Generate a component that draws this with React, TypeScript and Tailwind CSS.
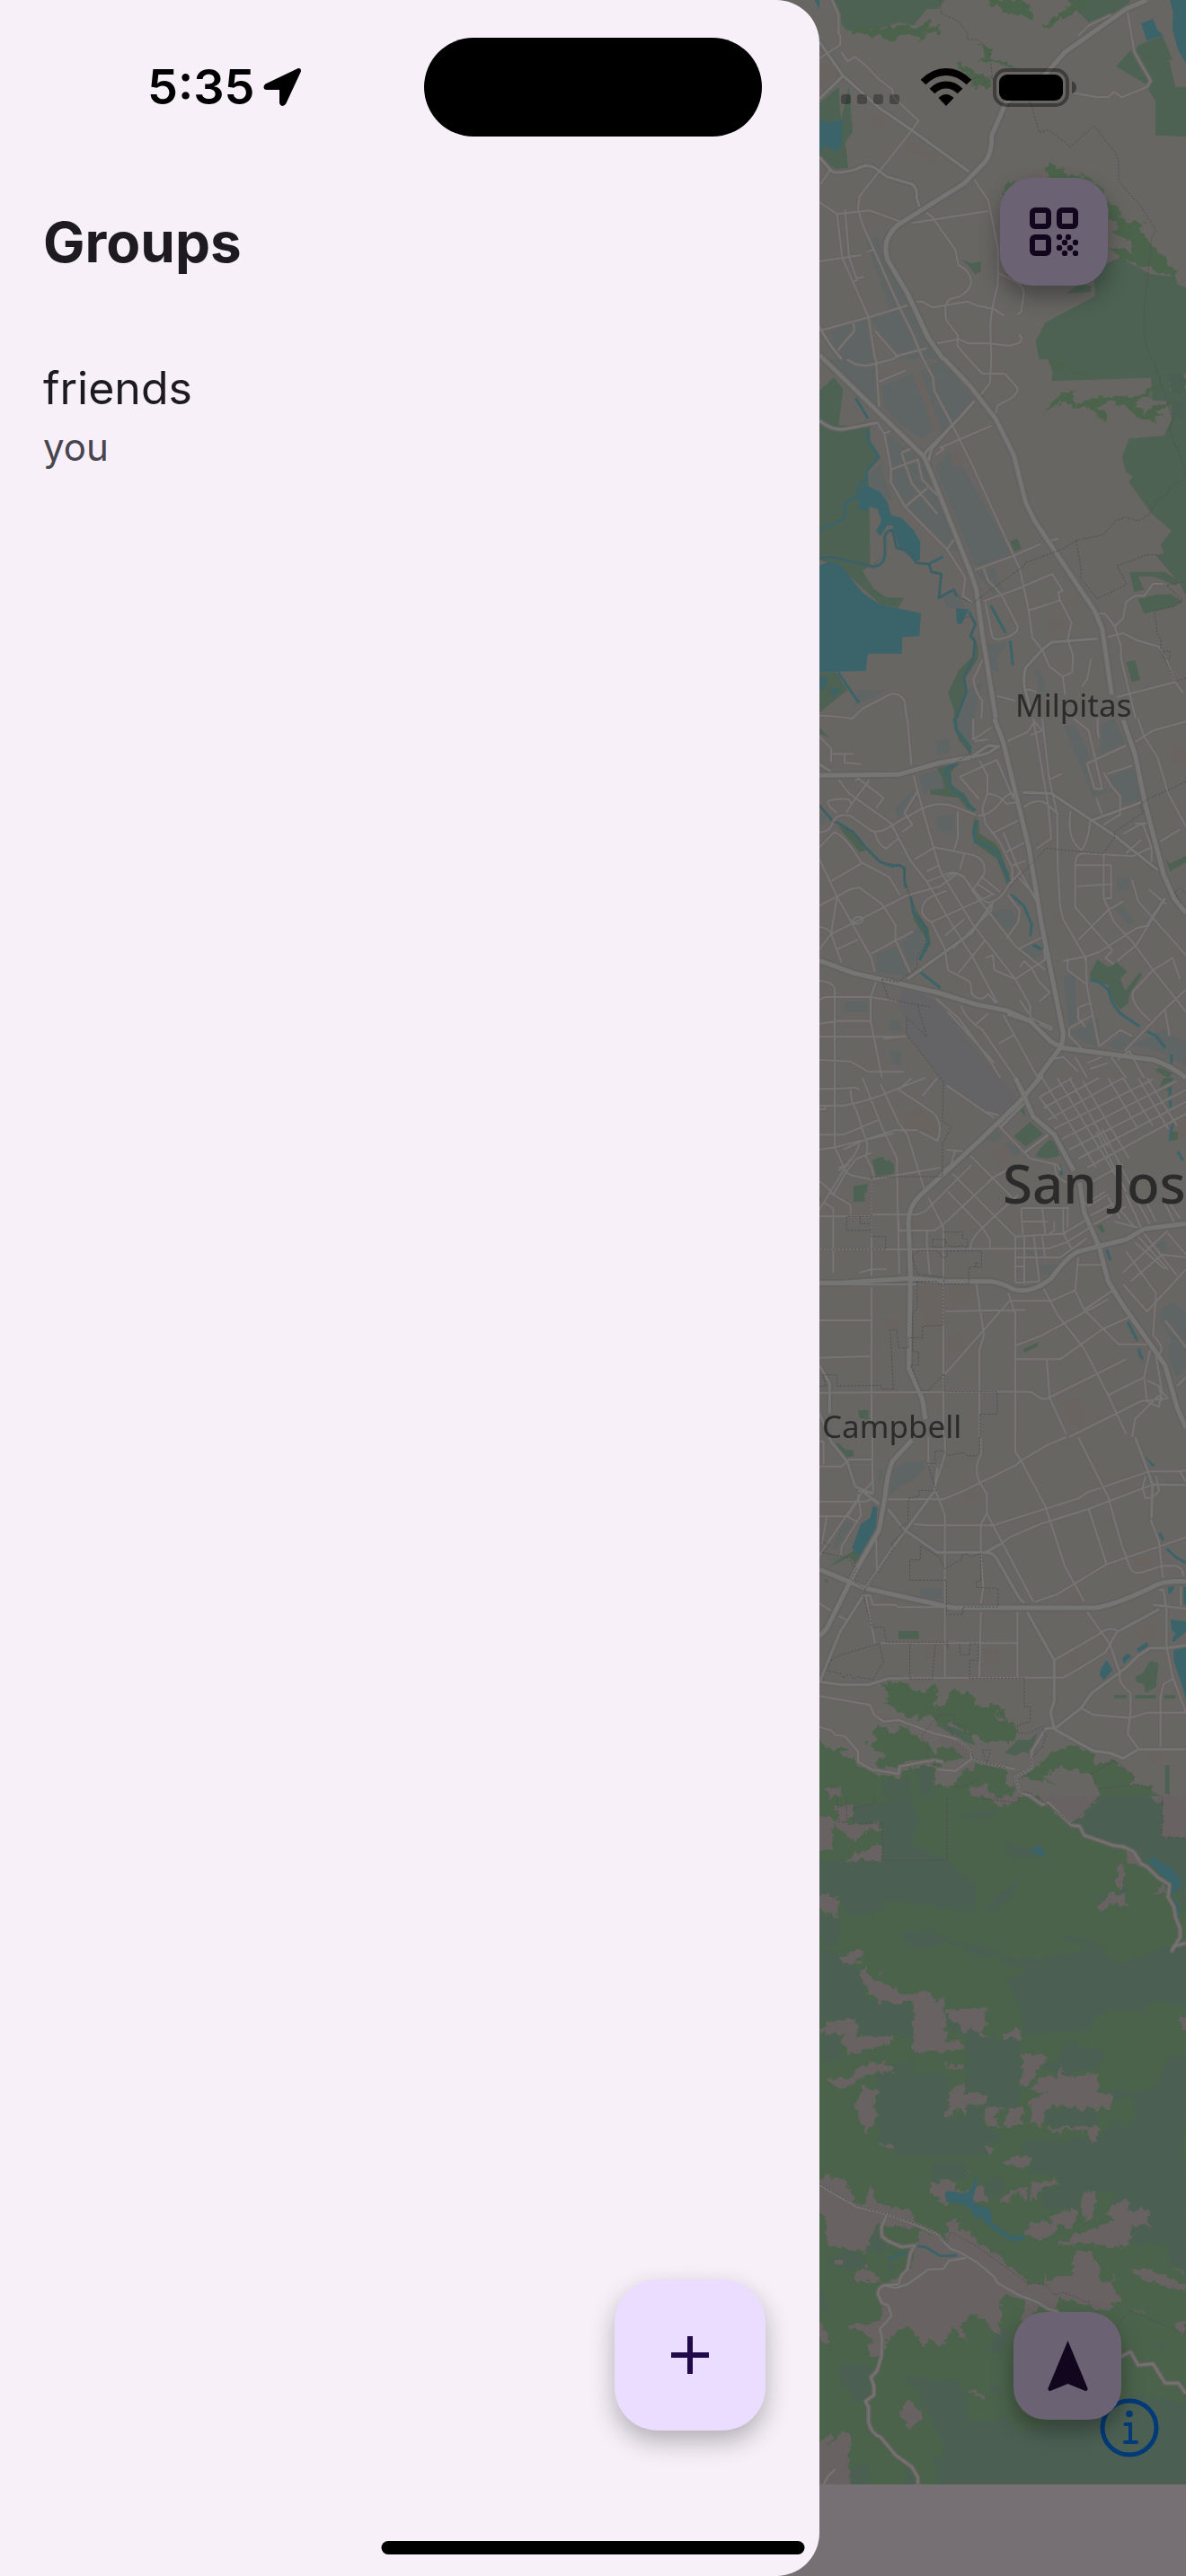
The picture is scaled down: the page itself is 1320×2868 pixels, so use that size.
import type { ReactNode } from 'react'

type Kind =
  | 'industry'
  | 'built'
  | 'airport'
  | 'park'
  | 'wood'
  | 'meadow'
  | 'clearing'
  | 'water'
  | 'river'
  | 'lane'
  | 'street'
  | 'highway'
  | 'border'

type Tile = { y: number } & Partial<Record<Kind, string>>

// each tile is 400px tall, its paths use 3 units per pixel
const tiles: Tile[] = [
  {
    y: 0,
    industry:
      'M190 800L230 790 250 860 330 1000 370 1080 440 1200H300L240 1110 205 1060 270 1030Z M70 1110L190 1065 215 1200H110Z M225 1060L320 1035 375 1200H290Z',
    built: 'M36 230L70 200 110 245 36 300Z M195 385L250 380 255 420 225 440Z M320 495L350 475 440 530 420 552Z M690 600L790 560 830 590 740 650Z',
    park: 'M85 0H455L430 30 395 30 350 85 300 75 240 95 130 103 112 85Z M865 0H1075L1060 25 935 75 890 30Z M1100 152L1182 120 1215 200 1203 200 1225 290 1260 290V457L1158 452V335L1137 302 1125 280 1026 222 1076 168 1090 185 1135 270 1142 262 1085 175Z M36 345L100 290 108 400 135 290 147 440 123 475 132 560 90 565 36 530Z M510 867L545 880 575 872 575 908 555 915 540 895Z M862 980L900 950 945 955 940 975Z M758 1140L790 1078 955 990 957 965 950 900 1040 860 1140 915 1225 925 1232 950 1260 960V1200H770Z',
    wood: 'M145 95L200 90 250 97 300 85 350 92 400 65 410 75 385 95 435 85 437 110 395 115 360 140 370 120 330 110 290 125 295 137 220 120 150 107Z M600 0H700L745 25 752 60 720 62 670 40 610 15Z M770 75L790 85 850 35 900 5 925 0H965L900 35 880 50 840 60 800 93 780 90Z M570 145L605 160 600 200 660 205 690 230 640 215 565 203 590 190Z M485 208L520 220 550 240 600 255 620 300 590 295 545 285 550 260 500 225Z M792 555L805 548 870 582 930 590 990 635 980 660 800 600Z M645 650L660 615 695 600 660 660Z M1000 670L1030 690 1060 725 1020 710 1050 740 1125 742 1110 770 1140 810 1190 865 1230 910 1225 930 1170 905 1130 890 1060 870 1000 830 1040 830 1090 850 1070 800 1010 780 1040 760 1000 720Z',
    water: 'M1110 77L1150 63 1163 97 1183 118 1130 137Z M36 410L53 400 70 412 90 402 112 402 110 485 90 508 68 490 50 488 36 515Z M1205 0H1260V210L1235 170 1215 100 1217 40Z M20 0H36V30Z',
    lane: 'M110 175L130 205 155 190 190 218 235 265 280 300 283 325 367 403 345 435 170 655 165 700 180 750 305 1030 345 1110 382 1200 M36 195L105 150 106 120 100 112 100 50 78 0 M40 615L70 570 M36 675L95 715 205 703 305 740 M95 715L112 860 200 1060 222 1200 M122 700L135 860 160 930 185 925M145 943L165 935 M36 873L175 852 M195 842L217 833 M345 745L600 705 M393 710L413 725 490 835 500 885Q540 905 543 940 540 970 505 990L470 1000Q450 1015 460 1070L498 1120 497 1155 535 1200 M360 1007L380 1008 415 1027 530 1007 560 1020 620 1033 652 1054 M553 600L600 670 632 830V950Q605 1050 607 1100L610 1200 M635 913L690 940Q725 960 717 990 L710 1040 697 1051 M430 1147L500 1133 535 1147 605 1147 670 1155 705 1145 712 1130 703 1117 M36 1105L200 1060 330 1020 M280 1200L300 1187 395 1163 M150 1080L153 1105 97 1170 M222 1105L300 1195 M1065 40L1088 175 1142 270 1130 290 1045 325 1020 306 1003 323 965 325 880 310 M900 120L935 85 1010 50',
    street: 'M36 140L115 253 235 360 345 435 535 573 M36 330L115 253 M36 525L75 570Q90 585 160 565 190 545 220 560L260 590 345 615Q365 630 360 660L370 690 M36 1090Q60 1140 110 1200',
    highway: 'M1130 0L1060 30 855 175 780 260 660 340 612 450 Q612 510 590 540L520 612 300 750Q240 800 265 870L330 980 400 1130 450 1200',
    border: 'M438 0L443 45 500 70 530 110V132H565L602 165 615 270 M740 340L770 443 800 433 875 490 953 420 1020 505 1035 535V607L1110 690 1160 770 1145 795 1120 1050V1130L1145 1200 M556 258H615L556 300Z',
  },
  {
    y: 400,
    industry:
      'M60 0H225L232 150 190 130Z M245 90L345 50 425 235 375 265 310 220 250 160Z M375 40L440 0 550 130 440 250 415 200Z M255 245L385 340 420 430 500 640 470 640 330 500 275 420Z M425 360L470 305 520 370 680 650 590 695 555 690Z M190 400L240 350 280 480 230 440Z M560 710L620 695 650 780 620 790Z M590 955L665 945 630 1000 635 1045 600 1030Z M520 1110L580 1080 550 1200H490Z M165 1105L260 1105 150 1160Z M755 1035L770 1035 795 1110H770Z M455 790L500 780 520 830H455Z',
    built: 'M355 55L380 60 430 200 445 245 420 240 390 160Z M470 320L500 305 520 355 490 365Z M803 870L850 860 855 895 810 920Z M865 800L900 790 900 830 870 830Z',
    park: 'M36 105L85 60 115 100 100 220 205 225 205 270 240 325 195 370 200 410 203 500 205 690 180 705 215 765 260 795 318 797 300 830 240 820 100 690 36 670Z M672 608L697 598 711 632 687 643Z M800 0H1260V48H1205V105H1260V790L1235 740 1160 655 1187 648 1175 620 1212 573 1145 515 1070 410 1083 390 1058 375 1048 325 1070 265 1187 255 1212 200 1210 140 1147 137 1143 62 812 72 815 45Z M1072 710L1190 710 1240 745 1225 755 1150 725 1100 725 1120 770 1087 777Z M1100 800L1165 785 1210 785 1250 810 1220 825 1120 850Z M36 1050L90 1045 130 1105 36 1180Z M550 920L567 960 565 1000 520 1070 530 1115 495 1200H485L485 1170 465 1115 500 1040 550 990Z M1060 1012L1090 1005 1107 1070 1080 1078Z',
    wood: 'M785 165L850 118 885 105 875 125 895 148 940 145 965 118 1000 128 1040 120 1080 130 1120 110 1150 85 1180 95 1120 130 1090 150 1120 178 1190 145 1215 150 1160 175 1190 190 1150 190 1165 220 1110 200 1060 155 1000 145 960 155 990 180 985 215 945 160 895 158 850 140 790 172Z M805 0L850 20 930 42 955 75 935 60 880 38 815 18Z',
    meadow: 'M1205 48H1260V108H1205Z M1208 138H1248V198H1208Z',
    water: 'M185 415L240 445 265 480 275 520 310 530 350 570 373 610 372 670 355 675 300 625 280 555 262 555 240 590 225 575 243 540 230 500 205 492 195 505 168 505 165 460Z M36 690L70 675 110 690 180 780 240 820 290 830 375 848 370 925 313 928 312 983 197 983 192 1040 105 1043 80 1045 36 1047Z M492 832L535 835 510 885 495 883Z M36 1065L68 1060 50 1105 36 1100Z M70 1105L110 1095 85 1128Z',
    river: 'M157 130L198 197M198 235V275L235 327 195 372 192 408 168 415 160 462 125 475 118 530 100 542 36 570 M36 667L70 660 215 693Q250 690 255 655V590Q260 570 280 570L293 630 332 640 360 680 403 685 410 710 443 717 435 797 485 770 495 793M535 843L557 885 540 925 555 940 550 1000 518 1060 527 1110 493 1200M403 683L448 660 M608 823L658 915M673 940L682 1022M98 1045L168 1148',
    lane: 'M225 0L235 160M235 75L323 37M128 0Q160 25 200 20L280 0M535 0L580 48H655L697 95Q700 110 680 128L630 155 625 180M383 0L415 60 420 105 480 220 540 340 705 700 735 840 747 930 780 970 803 1025 848 1060 857 1120M575 118L605 80 610 0M425 320L450 300 440 295 610 222M228 210L253 250 275 365V412L322 493 462 635 523 730 515 790 550 815M253 247L273 240M278 367L365 335 378 400 430 455M310 312L340 300M310 312L345 415 430 517M322 493L397 430M462 635L485 603M555 703L675 660 775 617M810 605L835 599M583 697L600 740 643 785 697 890Q705 910 670 925 620 945 613 925L590 812M583 808L690 770 813 717 848 772 833 780 840 805 878 880 865 935 883 990 880 1045 848 1060M733 840L840 805M970 850H990L1022 892 1043 960V1000L1092 1200M1022 892L1050 865 1060 810 1090 790 1120 790 1150 750 1185 750M998 928L1050 915 1100 940 1170 960 1195 1005 1225 1078 1250 1115M1225 1078L1030 1128 M580 1005L550 1070Q555 1110 580 1140L577 1200M630 1125L690 1140M36 1190Q80 1190 145 1200L180 1167 270 1120Q300 1110 320 1140L328 1200M943 1000L930 1070 912 1093M718 1105L740 1103 760 1112',
    street: 'M36 205Q80 240 120 233L228 212M553 140L500 200 400 300 385 320M810 945L965 933M810 945L780 970 725 1030Q715 1060 722 1100L740 1170 M480 220L410 300 400 340',
    highway: 'M36 -15L385 325 400 360 540 710 560 770 580 920 625 1200M450 -5L540 90 625 200 685 320 725 480 755 540 955 840 980 900 1012 1120',
    border: 'M36 665L75 660 215 690 255 650 250 590 280 570 293 628 332 638 358 678 403 685 410 710 443 717 435 795 485 768 500 795 545 815 720 690 722 680 850 633 893 605 983 587 1023 540 1060 528 1100 540 1135 520 1165 465 1190 460 1210 425 1255 395 1258 370 1205 235 1215 200 1150 0 M893 605L910 700 908 730 963 800 1062 752 1030 690 1130 653H1162L1235 745 1195 755 1250 805 1220 825 1155 840 1163 915 1177 935 1175 975 1225 1075 1260 1065M1183 975H1207V1000H1188ZM497 833L515 865 540 860 557 885 540 925 555 940 550 1000 518 1060 527 1110 493 1200',
  },
  {
    y: 800,
    industry:
      'M498 0H550L550 90 500 60Z M420 75L470 68 475 110 430 120Z M370 190L450 165 460 230 400 240 385 260Z M852 25L890 20 940 130 925 160 960 240 1030 235 950 262Z M975 20L1020 0 1060 90 975 120Z M1000 190L1085 165 1110 270 1050 285Z M290 300L350 240 360 260 300 340Z M425 330L485 320 485 370 460 382 430 365Z M610 650L650 635 675 635 700 670 690 700 660 715Z M310 750L370 690 390 760 340 830Z M225 790L300 760 340 860 230 850Z M850 860L890 850 890 1010 870 1030Z M715 770L760 750 790 780 740 810Z M1000 1090L1060 1045 1090 1070 1040 1110Z M1085 1090L1180 1040 1260 1080V1160L1160 1110Z M120 945H197V980H120Z M268 1005L308 1010V1045L270 1040Z M272 1110H308V1160L280 1150Z M1030 530H1070V570L1032 580Z M36 320H60L50 350 36 360Z M870 1050L970 1000 970 1095 940 1090Z M1010 620L1035 610 1090 680 1070 690Z',
    built: 'M1210 95H1260V155L1215 150Z M820 655L845 650 845 685 825 690Z',
    airport: 'M315 905L370 915 430 950 520 1060 635 1200H440L325 1050V1000L300 960Z',
    park: 'M480 0H495L500 40 545 95 540 120 500 70Z M430 165L500 150 475 180 478 220 520 255 555 305 545 320 500 265 407 253 405 240 455 232 445 195Z M552 340H567L570 385 620 415 640 440 675 545 665 560 630 470 555 415 545 380Z M100 360L150 375 190 440 170 447 130 400Z M940 850L965 805 1000 830 1030 815 1063 845 1040 870 1057 910 1105 848 1113 855 1070 925 1068 950 1040 972 1015 940 1000 890 940 868Z M1190 465L1205 485 1260 458V480L1207 510Z M345 600L355 640 400 700 407 750 395 775 375 800 395 740 350 670Z M1157 1175L1170 1165 1215 1185 1200 1200Z M36 30L70 65 36 50Z',
    river: 'M487 0L493 40 535 90 540 112 M500 152L460 165 455 185 470 187 470 220 495 252 515 253 535 290 557 307 M563 340L553 375 555 412 585 420 630 448 640 480 665 520V555 M36 290L75 335 110 355 150 380 190 430 240 480 280 493 303 490 320 500V540L327 567 M340 592L350 650 390 700 400 750 370 807 M370 845L440 900 M675 587L720 627 745 690 740 727M748 755L782 773M940 873L970 880 1000 905 1015 950 1040 985 1105 1028M1130 1045L1160 1060 1190 1100M1211 1122V1155',
    lane: 'M36 60L75 100V145M75 118H150M120 120V148L175 152M330 0L343 155M100 205L135 250 275 350 340 475 395 545 480 690 550 800 630 950M203 205L155 270 125 315M155 210L165 200 250 265 225 300M65 275Q100 265 135 270L145 290M65 275Q60 290 95 315M36 380Q70 380 80 350 90 315 140 325L210 375Q240 385 280 355L380 300Q440 275 490 295L560 323Q600 330 640 280T690 265M350 190L385 320 440 510 550 690 690 870 740 960M320 315L347 355 313 378M320 315L365 240M220 378Q230 420 258 435L300 400M570 140L597 190V250L580 300 590 350 640 415 680 500V550M505 195L628 138 685 270M505 195L570 270M597 250Q640 255 660 285L690 280M498 310V400L485 440M355 470L420 430 520 450 505 505M395 510L435 490M520 450Q600 460 585 520L550 570Q580 610 600 615 640 610 665 560L710 510M460 530Q490 505 520 530L570 610M378 640Q380 610 410 595L460 575M378 640Q380 665 410 680L455 770 465 840 540 880 545 920Q575 950 600 920L625 950M410 680L610 590M395 545L470 515Q520 510 550 580L690 760 790 840M665 590L705 640 700 680 660 735M455 725L520 670M480 770L545 705 610 640 615 610M700 770L780 730M760 595L700 530M500 850L590 740M590 800L615 790 620 840 690 870M705 830L720 810 745 835 770 880 805 915 770 945M690 870L790 805 785 770M720 295Q770 260 800 290L810 400 760 435M610 385L700 340M660 445L720 415M680 490L725 475 M36 430L85 380Q110 385 150 440L175 480 270 530 305 590M75 543L175 485M36 470L95 595 210 800 220 845M36 625L140 570 170 565 245 620 290 690V740L340 850M95 595L75 720 36 770M75 720L145 685Q150 655 180 665 185 690 145 685M145 685L330 590 440 560 500 515M75 720L110 815M97 770L165 738M210 785L350 710M36 695Q70 700 75 720M650 380L700 500 760 610M580 530L640 580 M780 0L803 200 830 320 832 500 840 630 850 670 925 800 930 900 970 1095M750 0L800 290 835 320M885 0L935 40 980 235 955 235 930 150 1060 90M965 0V40L970 65M997 185L1080 157M985 180L1010 225 1040 260V320L985 355M1100 0L1120 60 1165 130 1200 250 1260 360M1090 78L1150 40 1260 10M960 265L980 320M875 310Q860 400 910 440 935 410 940 340M890 490H1010V600H990M890 490V630L950 700 1015 775M897 560L1015 553M985 455V600L1020 680 1085 750 1150 840M890 490Q890 450 920 450L1080 460 1145 430M1080 540L1100 610 1220 745 1260 790M1135 570L1195 620M1050 385L1115 350 1145 430 1145 480M1060 450L1110 405M1130 350L1090 350M900 740L1000 640 1050 610M1030 810L1095 755 1190 600M1015 775L990 800 1020 820M850 810L925 795 970 780 1095 700 1140 690M865 840L925 885M865 840V800M1150 840L1260 980M1150 840L1085 910Q1070 940 1120 990L1140 1010M1150 840L1215 800 1240 870M1055 1110L1190 970 1260 905M1190 970L1205 1060M900 965V1000L925 1030M900 965L940 950M870 1035L950 990M870 1035V1060L910 1100M970 1095L1040 1040 1080 1060M36 940L55 930H205L300 945M36 1020L90 1010H207V930L225 880M87 900V1200M36 875Q80 880 87 900M36 1063H325M207 1010L245 1200M36 1140L140 1145 200 1180H320M250 1070L325 1060M425 935L500 1000 545 1060 610 1150 640 1200M465 980L530 1050 620 1150M510 960Q520 1000 580 1040L690 1200M560 1020L600 985M650 990L765 1200M635 1085L690 1055M560 550L620 590M740 960V1000L810 1030V1040L770 1020M705 940L735 985M800 1140L850 1130 900 1180 M930 1150L980 1130M940 1170L1000 1150M1010 1130L1060 1200M550 0V70L610 30M555 75L600 70M665 75L730 45 755 10 780 40 740 55M800 205L845 185M1175 410L1240 370M890 1130L930 1200M1030 1140L1070 1110 1120 1200',
    street: 'M715 247L810 250 1020 390 1165 505M540 130L600 90 635 93 600 115 545 130M945 340L1110 280M330 870L545 715 610 620M36 152Q60 170 75 175M1130 690L1190 600M925 795V810',
    highway: 'M36 190L300 187 440 147 540 130M620 0L650 80 735 430 780 700 850 1050 Q850 1080 840 1100L765 1200M36 808L150 850 430 915 560 955 660 975 740 1010 810 1080 850 1100 1150 1140 Q1210 1160 1260 1200M1050 5L1090 120 1125 290 1185 520 1220 600 1260 650M665 985L740 1010',
    border: 'M540 115L465 165M563 320L555 340M327 560L340 600 390 700 392 750 362 800 363 830 300 880 243 870 268 938 405 963M365 960L395 1065 327 997V1055L440 1200M670 563L793 433 983 452 1023 395 1020 380 1118 315 1105 290 1130 270 1210 235 1260 210M36 290L75 340 150 380 185 430 240 480 303 490 320 500V560M1223 580L1240 565 1260 585M1223 580L1245 620',
  },
  {
    y: 1200,
    industry: 'M590 200L630 175 650 190 620 215Z M650 225L670 215 710 245 690 265Z M775 625H830L825 655H775Z M720 575H775V600H720Z M1180 770L1220 750 1260 780V970L1230 1000 1200 940 1210 870 1170 800Z M1155 550L1180 535 1200 570 1180 595Z',
    built: 'M310 110L370 105 430 150 425 200 370 175 320 165Z M610 240L660 225 680 260 640 290Z M365 695H440V830L380 830Z M465 700L550 690 545 750 480 765Z M465 870L520 850 520 905 475 930Z M850 1090L900 1070 935 1130 890 1170 860 1140Z M250 800L310 810 305 840 265 840Z M330 480H375V510H330Z M1210 150L1260 120V210H1230Z',
    airport: 'M440 0H640L700 75 645 120 600 110 455 25Z',
    park: 'M685 195L740 147 783 187 725 230Z M757 262L775 235 805 205 825 220 838 260 795 270Z M704 95L720 105 725 130 710 115Z M212 275L247 262 255 275 270 275 285 290V325L225 327Z M150 362L197 355 195 383H187V413H150Z M717 905L767 883 765 897 720 918Z M165 1110H200V1140L170 1138Z M1170 35L1185 0H1215L1205 45Z M1210 180H1233V205L1213 210Z M963 495L978 488 990 515 978 517Z M36 395L42 405 36 412Z',
    river: 'M1212 0L1205 60 1210 115M1218 142L1210 180 1207 210M1232 247L1250 275M995 573L1008 610M1065 815L1098 878M1102 905L1108 930 1117 938M838 290L845 325',
    lane: 'M36 37H90L155 32 170 40M36 93H115Q200 80 300 35L390 0M36 190H115L235 140M36 240L95 230 165 212 285 185M36 105H55V90M87 0V230L125 315 160 270 210 250M140 40Q140 80 160 110L185 190Q205 230 190 260L210 300 220 340M180 0L245 165 295 270 297 430 302 515M240 20L300 150 330 190 385 370M300 40L370 85 420 120Q450 160 430 210L370 180M115 240L180 210 285 175 365 175M300 40L345 0M380 60L430 0M36 345L60 365 82 390 125 315 140 325 210 340 440 300M36 440L140 270M210 340V660M36 463H210M210 457H360L390 445 545 290M297 430L303 655M298 510H420L450 490M36 573H360L690 570 800 570 860 550M82 435V650M82 435L48 415M82 390L140 425V455M170 650L210 640H260M395 510V560L405 660M450 560V1200M400 400L450 500V560M480 320L690 530M465 380L580 500 605 540V570M540 570Q540 540 580 500L700 390M540 260L680 400M450 490L620 330 700 290M460 25L620 135M635 160L740 270M595 115L635 125M36 810H210V700M210 700V1150M36 690H300L360 690M36 935L205 930M36 1052L690 1048 745 1050Q780 1080 800 1070L1060 940M690 780V1200M455 780L725 775M560 690L575 790 585 860 570 910V1200M455 990L675 740M667 720L688 785M675 745H810M690 530V680M690 530L860 520M685 630H720M720 530V690M690 600H840L930 535M752 530L770 680 690 685M780 530L790 605M710 435H870M710 435L715 525M780 435L790 520M715 480H800M820 480V510L805 520M690 895L780 860 1000 740M690 940H840L980 840 1070 800M795 940L805 1070 860 1190M785 705L830 790 920 905 1000 1060 1060 1190M810 745L890 710 900 600M890 710L920 775 1035 890M920 775L1015 710M870 1200L1110 1080 1200 1070M1035 890H1130M900 625H980M1000 1060L1120 1000M820 290L830 330 860 350M740 270L830 290 840 310M460 240L515 245M490 240L475 290 450 310 M850 430V520L880 575M865 430V500M860 550L940 500M850 520L935 470M100 300L135 290M170 220Q150 280 100 310 M770 65L880 0M785 100L970 0M800 140L1050 0M820 170L1150 5M845 205L1230 10M870 240L1260 40M900 270L1260 80M930 300L1260 120M940 350L1050 290M930 430L1000 390M770 65L830 140M780 0L960 300M830 0L1040 350M870 0L1000 230M915 10L1070 270M1000 0L1100 170M1050 0L1150 160M1100 0L1200 170M1130 0L1230 160M980 170L1080 370M960 180L1060 380M1020 480L1100 500M1060 390L1110 500M1090 400L1140 490M1030 430L1090 500M1120 400L1160 480M950 490L1060 430M940 460L1020 420M1180 400L1220 480M1200 410L1240 470M1050 650L1200 510M1075 680L1180 590 1260 600M1100 530L1200 640M1120 520L1230 660M1090 550L1190 640M1050 690L1130 780 1260 640M1060 580L1160 720 1150 860M1150 860Q1200 910 1160 930L1180 1050 1200 1070M1140 910L1120 1000 1130 1080 1170 1100 1175 1060M1170 1060L1090 1140 1080 1200M1130 1010L1170 1030 1180 1080M1190 810L1260 900M1200 520L1260 590M1260 1000L1230 1030 M910 430L990 380M1000 400L1040 470',
    street: 'M720 250L800 190M640 165L720 85M36 960L70 1020V1120',
    highway: 'M780 -10L700 85 560 220 370 395Q335 430 333 480L340 650 335 970 380 1075 390 1140M690 0L715 50 750 130 820 190 885 310 M905 350L920 450 970 565 1000 680 1050 760 1190 960 1230 1100 1260 1170M36 685L120 684 340 670 460 680H610Q660 690 680 705 740 725 810 670 860 600 900 580L1060 540 1120 505 1260 487',
    border: 'M440 0L450 15 447 145 478 163 447 220V330H210V530H257V573H36M210 463H127V510H210M172 463V487H210M450 515H515L513 535 530 540V567L510 560 485 565 465 560 455 540M413 540H455V565H413ZM346 595L370 577H430L447 600H460L465 590 452 578H577V632H535V688H452V665L362 655ZM362 680H430L435 690H450V825L380 830V868H333V902H302L292 842H273L283 1040H243V1027L95 1030V992H48L58 1030H36M362 680V770L347 790V915H367V960H340L375 1045H400L452 988V1048H630V1123H572V1200M555 620L565 615 553 635',
  },
  {
    y: 1600,
    industry: 'M280 110L330 82H390L385 110 340 150 310 160 270 195Z M370 505H450V540H375Z M120 280L145 290 90 375 80 370Z M230 105L250 110 235 160Z M65 405L130 400 100 425Z',
    built: 'M510 190L550 180 565 215 530 230Z M1085 405L1140 395 1145 425 1090 435Z M860 530L885 520 910 550 865 555Z M1090 650L1150 620 1180 660 1110 680Z M585 705H640V750H590Z M855 750L890 720 910 740 880 770Z M385 700L415 690 420 740 390 735Z M1130 1060L1190 1050 1170 1085 1140 1090Z M230 535H320V550L240 555Z',
    park: 'M80 20H100L120 40 150 45V65L120 67 95 50Z M300 648H368V674H300Z M1090 800L1115 790 1140 748 1168 755 1160 835 1125 855 1120 825 1095 820Z M1020 862H1062V872H1020Z M1090 862H1160V873H1090Z M1187 862H1225V873H1187Z M655 1055L700 1010 740 1010 765 985 740 1060 715 1050 690 1065Z M1190 1095H1205V1195L1190 1190Z M420 960L450 958 540 990 557 1030 500 1010 450 975Z M990 1180L1100 1160 1180 1200H970Z M65 435L100 410 215 340 215 360 160 425 135 400Z M53 475H62V487L55 485Z M1240 770L1260 750V800H1235Z M593 1120H660V1150L600 1170Z',
    wood: 'M243 825L300 815 330 820 345 845 390 850 425 825 430 870 405 900 460 895 480 840 520 850 555 870 560 900 600 910 610 885 640 895 660 940 680 960 692 1010 660 1020 640 1010 590 1020 560 1000 520 985 480 950 440 960 400 930 370 950 370 930 330 940 290 910 250 880 265 865Z M225 955L250 965 270 985 320 970 350 985 370 1010 400 1020 420 1060 465 1020 500 1050 540 1060 510 1080 470 1075 430 1100 380 1085 340 1080 300 1105 230 1105 225 1080 260 1070 215 1045 195 1030 220 1010Z M-20 1015H36L70 1045 130 1030 120 1050 95 1060 155 1070 165 1100 230 1130 300 1135 310 1115 360 1095 420 1105V1165H480L520 1110 580 1090 660 1100 660 1160 690 1175 680 1200 690 1220H-20Z M705 1140L770 1100 780 1075 870 1030 950 1050 960 1090 1020 1080 1085 1130 1080 1170 1140 1165 1150 1180 1090 1220H980L960 1150 920 1120 840 1100 780 1135 825 1160 760 1145Z',
    meadow: 'M245 1150L340 1140V1200H250Z M365 1100L410 1105 415 1200H370Z',
    clearing: 'M430 1010L480 1000 545 1040 530 1070 460 1040Z M450 1120L560 1090 550 1110 480 1120Z M60 1170H110V1200H60Z M540 1170L590 1160 610 1200H545Z M618 915L660 945 640 950Z',
    water: 'M215 230L230 235 225 295 205 355 175 395 160 390 145 370 175 290 205 270Z M975 775L995 745 1015 778 985 812 972 795Z M1047 738L1065 722 1078 732 1052 758Z M1095 707L1130 685 1133 697 1105 724Z M1120 60L1158 97 1145 97Z M1200 500L1222 498 1215 515 1202 527Z M1252 500H1260V560H1252Z M1208 610L1260 615V650L1220 684 1212 680 1225 655 1212 645Z M1218 712L1260 700V880L1250 840 1220 750Z',
    river: 'M1195 372L1225 400 1260 420M1172 320L1185 345',
    lane: 'M36 15H50V90M36 98H110L135 75H213M213 0V150L175 190 36 395M36 215H190L215 205M36 265H130L165 285M60 268L45 355M215 140V185L165 180M165 190L175 260 110 365 108 395M215 205L235 220M130 265L165 210 M265 208H450L520 178 690 95 710 78 800 25 860 0M350 290L395 295H615L900 205 930 185 1135 115 1240 115 1260 110M455 260V800M455 0V60L420 170 455 260M400 0V95M690 0V50L710 80 790 230 855 430 920 550M575 0V60Q550 100 570 150L595 190V255L575 290V385M595 255L750 550M900 0L1000 200 1045 360 1075 440Q1085 460 1120 450L1180 430H1225Q1250 435 1253 465M645 355L670 335 775 290 935 240 1145 160M935 240L995 425 1260 335M995 425L830 525 755 550M575 385L583 500 575 555M575 585L570 800M697 585V800M240 688H697M225 335L228 445M190 530L222 690M100 597L125 610M36 555L75 580M185 528L205 530 215 560H290L300 568H460M310 805L850 803 900 775 990 720 1030 650M820 745L975 655Q1000 630 1040 650M930 585L1005 690 1040 790Q1030 820 1075 855V920L1065 990 1100 1040M36 865L205 895 220 930 250 950 300 945 420 990 500 1010 540 1045 545 1075M36 968L75 980 90 995 120 998 165 1050V1085L210 1110 300 1125 305 1100 380 1085 420 1080 450 1085M545 1075L490 1115 430 1110M545 1075L600 1090 690 1110M1150 560L1260 573M1195 580V700L1215 800 1260 920M1215 808L1185 825 1175 870V1035M910 905L950 928 1075 938 1130 920H1260M1170 510L1185 510 1195 580M1142 275L1170 350 1183 470M1125 130L1115 170 1125 205 1150 200 1170 180 1160 130M1240 115L1260 150M1243 500V565',
    street: 'M36 -80L75 15 130 85 155 165 215 190M185 185L235 225M265 240L320 310 430 385H590L645 355M430 100L420 180 280 370 190 505M185 525L105 650 36 820M590 385Q620 385 630 410L705 540 720 553M730 585L820 745V880L808 920 820 975 950 1048 1005 1055 1050 1073 1100 1043H1260M820 975L910 905 945 855 1060 770 1100 730 1140 705H1195L1260 695M1090 0L1135 120 1148 160 1145 270M1145 158L1260 160M1040 645L1170 575M36 817L110 827H200L270 805 310 807M820 970L790 975 745 1050V1105L690 1135 705 1185 745 1200',
    highway: 'M345 10L280 80Q262 120 255 200L235 310 155 450 60 640 36 665M36 442L190 505 480 570H960Q1030 560 1170 490 1200 480 1260 482',
    border: 'M572 0V50L560 62H530L515 52 465 62 452 47H422V88H398L425 180 370 178 368 198 333 205 332 285 305 300 320 315 275 355 285 370 190 508 140 475 160 440 130 403 45 385 70 362 40 345M190 508L183 530 212 635 250 635 260 685H465V705L455 690M338 690V808H413L423 690M505 690V727H538V690H567V745H538V805H720V900H740V950L697 963V987L730 990 780 967 793 1000 780 1035 745 1070V1105L690 1135 705 1185 745 1190M373 363V410H338V478H460V592H515V567H633V505L560 502V482L575 480V388L540 402 530 390 512 392V407L455 440 435 400ZM75 745L110 727 235 690 250 750 215 810 165 800 150 808 135 790 115 805 108 790 60 780ZM435 928H485V955L525 965V990M435 928L375 1000 400 1040V1080M420 1080V1167H520L575 1140M460 960L500 1010 540 1045 550 1075 660 1105M580 1045H607L595 1090ZM1020 1080L945 1125 965 1175 1110 1160 1145 1180M1020 1080L1085 1130 1085 1165',
  },
  {
    y: 2000,
    wood: 'M-20 0H760L880 93 970 0H1300V1240H-20Z',
    meadow:
      'M36 220L245 215V95L150 90V40L220 30 340 0 370 80 250 100 460 215 560 290 550 390 500 380 360 360 270 350 210 400 130 390 100 330H36Z M150 30L340 25 370 75 345 150 260 200 245 90Z M970 0H1180V138L1260 140V400L1220 300 1130 230 1060 165 920 120 885 95Z M585 380L640 320 710 260 690 330 640 370 590 395Z M300 455L420 445 500 490 600 500 660 540 800 540 900 520 940 490 840 485 860 465 930 470 1040 560 1260 480V700L1150 690 1120 720 990 710 930 780 715 800 700 690 660 620 720 580 640 545 550 530 480 490 340 510Z M36 400L100 400 105 500 40 505Z M36 510L105 520 165 570 200 680 345 690V890H285V925L350 930V800L285 800 170 800 160 745 50 742 36 740Z M36 800H105V885H50Z M230 925H465V1070L525 1075V1035L590 1040V1110L645 1120V1150L590 1160 600 1200H285V1163H230Z M460 710L470 780 525 790V990L590 1035H700L710 810 600 800Z M845 815L990 850 960 910 845 930 770 910 780 880 830 900Z M790 1045H965V1100L790 1100Z M1200 880L1260 860V1100L1240 1200H715V1150L850 1150 980 1130 1020 1070 1060 1100 1090 1070 1080 1000 960 1030 970 985 1150 980Z M650 160L730 170 760 215 720 210 660 190Z M945 330H1030V280L1060 270 1060 320 980 350Z M510 70L560 45 640 50 600 75Z',
    clearing:
      'M95 30L150 30 145 70 120 90 240 90V115L205 110 190 130 150 145 90 100 75 95 95 80Z M20 60L80 60 85 180 20 180Z M130 210L160 190 205 175 243 165V213H130Z M20 330H98V405L60 380 20 380Z M100 540L140 515H178V545L130 560Z M165 595L190 575 215 610 270 630 305 655 370 655 395 650 430 690 455 665V820L520 822V835L470 850 350 858V690L240 685 205 650Z M460 708L500 715 600 705 585 750 605 755 575 780 600 800 575 805 555 780 525 790 470 740Z M650 790L680 785 705 772 707 808H655Z M48 765L105 745H160V800L285 803V820L210 835 150 865 115 830 120 795 50 795Z M160 905L240 890 285 905V920L215 925 120 975 90 970 60 945 155 930Z M180 970L225 985 222 1090 195 1125 165 1080 160 1030Z M450 895L520 900V915H485Z M465 985L520 960 525 993H588V1030L525 1035V1067L490 1040 485 1070H465Z M592 1035L655 1035 620 1070 640 1105 595 1100Z M670 1035H715V1085L680 1105 650 1100Z M712 860L795 870 800 880 770 900 755 930 730 965H712Z M735 985L785 930 830 940 835 895 850 930H963V990H1015V1042H880L820 1035 790 1050 780 1100 740 1095V1010L800 990Z M800 1105L965 1103V1153L935 1150V1120L850 1110 840 1130Z M230 1163H285V1178Z M590 1165H608V1190H590Z M1030 235L1050 225 1055 300 1030 310Z M960 365L1000 325H1055L1065 370 1010 360 970 385Z M1060 190L1100 195 1105 235 1070 225Z M1150 330L1190 290 1195 320Z M1178 0H1280V137H1182Z M1137 0H1178V17H1137Z M1245 740H1280V780H1245Z M230 585L245 595 232 602Z M580 0H700V17L640 30Z M760 0H970L880 92 840 60Z',
    water: 'M740 183L765 165 783 168 780 182 791 190 783 205 765 195Z M1133 215L1150 202 1175 218 1225 250 1230 272 1245 275 1243 300 1215 325 1240 380 1238 410 1215 340 1205 290 1165 250Z',
    lane: 'M740 0L780 28 800 20 840 60 880 97 905 100 920 130 1020 165 1050 168 1085 185 1110 225 1130 235 1165 270 1205 295 1200 335 1220 370 1225 405 1240 440V470L1213 515 1220 500 1260 490',
    border: 'M760 0L840 60 880 92 970 0M150 90H247V213H462V0M1180 0V137L1260 138M150 90V40L220 25V0M95 0L100 85H127V0M580 8L700 20V0',
  },
  {
    y: 2400,
    wood: 'M-20 0H1300V1140H-20Z',
    meadow:
      'M410 30L530 20 525 80 400 80Z M585 85L655 75 650 135 590 138Z M740 0H1260V400L1195 335V300L1075 295V180H1015V118L910 120 910 180 780 178 775 115 835 110V65L740 60Z M225 230L245 280 290 320 190 325Z M68 340L110 315 160 320 183 340V370L120 383 80 365Z M265 350L290 370 280 395 260 375Z M36 440L60 510 36 525Z M100 715L115 690 210 705 200 810 155 830 105 740Z M325 733L430 760 498 742 505 790 530 785 525 850 545 890 630 890 650 860 700 920 760 910 900 880 1080 795 1140 800 1280 835V1140H455L410 1010 445 1000 452 965 400 860 375 840 360 780 320 755Z M600 640L650 575 675 585 640 665Z M608 745L640 780 635 800 610 795Z M138 1037H200V1140H138Z M320 1055L340 1040 360 1140H318Z M1165 640L1190 615 1195 660Z',
    clearing:
      'M20 80L90 70 120 85 150 130 150 160 190 165 205 100 225 150 260 175 295 170 360 205 350 240 280 240 230 225 190 320 120 310 70 305 50 250 60 205 20 180Z M400 85L490 85 480 110 520 120 575 100 600 150 560 160 500 150 460 160 420 140Z M645 20L700 0 735 5 735 35 680 35Z M530 35L545 45 530 52Z M630 155L680 115 730 105 730 155 700 120 660 155Z M740 95L800 85 820 70 835 90 780 110 740 155 740 115Z M725 250L750 220 830 225 830 250 780 280 730 265Z M915 120H965L945 215 920 215Z M800 200L880 180 900 190 870 240 820 230Z M830 295L900 265 960 240 1020 220 990 190 1020 170 1060 140 1070 180H1137V235H1080L1075 290 1020 310 930 290 840 300Z M370 255L430 265 460 290 465 220 495 210 500 250 540 255 570 300 605 310 700 390 735 430 790 430 780 380 800 420 880 400 885 320 940 320 970 350 970 420 1000 420 1045 480 1000 510 960 515 900 490 830 470 830 520 760 500 740 560 700 555 725 495 650 455 635 605 580 545 545 530 500 575 545 620 510 605 480 570 450 630 400 620 385 640 355 595 325 570 270 610 245 670 205 670 195 630 215 625 185 590 140 575 135 560 235 560 250 490 230 460 260 430 340 380 360 300Z M155 410L185 370 220 385 225 415 260 430 200 425Z M1070 385L1130 380 1240 420 1260 430V450L1190 440 1120 410Z M1195 370L1260 390V400Z M1005 430L1030 365 1015 420Z M305 840L340 820 383 875 340 920 305 870Z M20 970L75 930V960L120 920 137 940V1140H20Z M20 530L36 550 75 620 50 630 20 580Z M530 775L580 800 585 820 560 805Z M85 350L115 345 118 370 90 365Z M1085 515L1125 520 1120 535Z M1210 560L1260 550V600Z',
    water: 'M455 125L465 118 520 125 540 115 555 78 565 75 563 95 548 145 562 165 600 175 612 200 610 220 655 255 680 270 700 265 725 270 720 280 690 287 650 270 590 225 575 205 555 212 550 190 520 165 460 155Z',
    river: 'M360 302L390 305 440 335 495 333M265 345L327 322',
    lane: 'M36 97L90 130 160 170 260 195 370 235 430 265 475 312 500 320 560 355 620 405 630 425 700 465 765 490 800 512 835 522M260 200L243 240 245 270 265 285 310 305 355 300 340 325 330 380 310 400 300 430 255 433Q230 440 232 465L245 492 265 500 277 535 237 580 245 605 243 670 228 720 208 740 218 770V800L190 820 200 840V890Q210 930 240 940L290 1000 345 1040 365 1075V1097M255 433L290 442 330 430 400 380 450 378 470 350 525 342M1040 673L1075 655 1100 700 1150 695 1190 760 1235 760 1260 795M50 1097L65 1070 88 1048',
    border: 'M36 95L160 167 260 195 380 235 463 290 470 262 485 258 500 270 550 295 730 425 790 430 820 465 850 457 900 475 920 490 935 485 940 505 1030 570 1070 517 1260 597',
  },
]

const paint: Record<Kind, string> = {
  industry: 'fill-[#5f6465]',
  built: 'fill-[#6a6461]',
  airport: 'fill-[#646366]',
  park: 'fill-[#4d6253]',
  wood: 'fill-[#4c634b]',
  meadow: 'fill-[#4c6152]',
  clearing: 'fill-[#686462]',
  water: 'fill-[#3b646a]',
  river: 'fill-none stroke-[#3b646a] stroke-[9]',
  lane: 'fill-none stroke-[#757574] stroke-[6]',
  street: 'fill-none stroke-[#757574] stroke-[9]',
  highway: 'fill-none stroke-[#757574] stroke-[15]',
  border: 'fill-none stroke-[#515050] stroke-[3] [stroke-dasharray:7_5]',
}

const halo: Partial<Record<Kind, string>> = {
  lane: 'fill-none stroke-[#686462] stroke-[16]',
  street: 'fill-none stroke-[#646260] stroke-[18]',
  highway: 'fill-none stroke-[#646260] stroke-[26]',
}

function Layer({ kind, filter, className = paint[kind] }: { kind: Kind; filter?: string; className?: string }) {
  return (
    <g className={className} strokeLinejoin="round" filter={filter}>
      {tiles.map((tile) =>
        tile[kind] ? <path key={tile.y} transform={`translate(0 ${tile.y}) scale(0.33333)`} d={tile[kind]} /> : null
      )}
    </g>
  )
}

function MapCanvas() {
  return (
    <svg
      className="absolute inset-0 h-full w-full bg-[#686663]"
      viewBox="-36 0 456 2766"
      preserveAspectRatio="xMinYMin slice"
      role="img"
      aria-label="Map"
    >
      <defs>
        <filter id="ragged" x="0" y="0" width="100%" height="100%">
          <feTurbulence type="fractalNoise" baseFrequency="0.12" numOctaves="3" seed="4" />
          <feDisplacementMap in="SourceGraphic" scale="12" xChannelSelector="R" yChannelSelector="G" />
        </filter>
      </defs>
      <Layer kind="industry" />
      <Layer kind="built" />
      <Layer kind="airport" />
      <Layer kind="park" />
      <Layer kind="wood" filter="url(#ragged)" />
      <Layer kind="meadow" filter="url(#ragged)" />
      <Layer kind="clearing" filter="url(#ragged)" />
      <Layer kind="water" />
      <Layer kind="river" />
      <Layer kind="lane" className={halo.lane} />
      <Layer kind="street" className={halo.street} />
      <Layer kind="highway" className={halo.highway} />
      <Layer kind="lane" />
      <Layer kind="street" />
      <Layer kind="highway" />
      <Layer kind="border" />
      <g className="fill-[#2b2b2b] font-['Noto_Sans',sans-serif] text-[35px]">
        <text x="230" y="798">Milpitas</text>
        <text x="15" y="1601">Campbell</text>
        <text x="216" y="1340" className="text-[60px] font-medium">San Jose</text>
      </g>
    </svg>
  )
}

function StatusBar() {
  return (
    <header className="absolute inset-x-0 top-0 z-20 grid grid-cols-[1fr_auto_1fr] items-center pt-[42px]">
      <div className="flex items-center gap-2 pl-[164px]">
        <time className="text-[54px] leading-none font-semibold text-black">5:35</time>
        <svg className="size-[44px]" viewBox="0 0 44 44" aria-hidden="true">
          <path
            d="M40 2.500 4.500 19.500Q3 20.500 3 22T5 23.500H19.500Q20.500 23.500 20.500 24.500V39.500Q21 41.500 22.500 41.500T25 39.500L41.500 4Q41.500 2 40 2.500Z"
            stroke="#000"
            strokeWidth="3"
            strokeLinejoin="round"
          />
        </svg>
      </div>
      <div className="h-[110px] w-[376px] rounded-full bg-black" />
      <div className="flex items-center pl-[88px]">
        <svg className="mt-7 h-3 w-[66px]" viewBox="0 0 66 12" fill="#000" fillOpacity=".3" aria-hidden="true">
          <rect width="11" height="11" rx="3" />
          <rect x="18" width="11" height="11" rx="3" />
          <rect x="36" width="11" height="11" rx="3" />
          <rect x="54" width="11" height="11" rx="3" />
        </svg>
        <svg className="ml-[22px] h-[42px] w-[58px]" viewBox="0 0 58 42" aria-hidden="true">
          <g fill="none" stroke="#000" strokeWidth="8">
            <path d="M3.500 15.500Q15 4 29 4T54.500 15.500" />
            <path d="M13.500 25.500Q20 18.500 29 18.500T44.500 25.500" />
          </g>
          <path d="M20.500 33Q29 25 37.500 33L29 42Z" />
        </svg>
        <svg className="ml-[23px] h-[43px] w-[93px]" viewBox="0 0 93 43" aria-hidden="true">
          <rect x="2" y="2" width="81" height="39" rx="13" fill="none" stroke="#000" strokeOpacity=".4" strokeWidth="4" />
          <rect x="7" y="7" width="71" height="29" rx="9" />
          <path d="M88 14.500Q93 16 93 21.500T88 28.500Z" fillOpacity=".4" />
        </svg>
      </div>
    </header>
  )
}

function MapButton({ label, className, children }: { label: string; className: string; children: ReactNode }) {
  return (
    <button
      type="button"
      aria-label={label}
      className={`absolute flex size-[120px] items-center justify-center rounded-[36px] bg-[#6b6373] text-[#11061d] shadow-[0_12px_24px_rgba(0,0,0,0.32)] ${className}`}
    >
      {children}
    </button>
  )
}

function QrIcon() {
  return (
    <svg className="size-[54px]" viewBox="0 0 54 54" aria-hidden="true">
      <g fill="none" stroke="currentColor" strokeWidth="6">
        <rect x="3" y="3" width="18" height="18" rx="3" />
        <rect x="33" y="3" width="18" height="18" rx="3" />
        <rect x="3" y="33" width="18" height="18" rx="3" />
      </g>
      <g fill="currentColor">
        <circle cx="33" cy="33" r="3.200" />
        <circle cx="43" cy="33" r="3.200" />
        <circle cx="39" cy="39" r="3.200" />
        <circle cx="51" cy="39" r="3.200" />
        <circle cx="33" cy="45" r="3.200" />
        <circle cx="45" cy="45" r="3.200" />
        <circle cx="39" cy="51" r="3.200" />
        <circle cx="51" cy="51" r="3.200" />
      </g>
    </svg>
  )
}

const groups = [{ name: 'friends', members: 'you' }]

export default function App() {
  return (
    <div className="relative flex min-h-screen overflow-hidden bg-[#767074] font-[Inter,sans-serif]">
      <StatusBar />

      <aside className="z-10 flex w-[912px] shrink-0 flex-col rounded-r-[48px] bg-[#f7f0f9] px-[48px] pt-[234px] pb-[162px]">
        <h1 className="text-[62px] leading-[72px] font-bold text-[#1d1b20]">Groups</h1>
        <ul className="mt-[90px] flex-1">
          {groups.map((group) => (
            <li key={group.name}>
              <a href="#friends" className="block">
                <span className="block text-[50px] leading-[72px] text-[#1d1b20]">{group.name}</span>
                <span className="block text-[42px] leading-[60px] text-[#49454f]">{group.members}</span>
              </a>
            </li>
          ))}
        </ul>
        <button
          type="button"
          aria-label="Add group"
          className="mr-3 flex size-[168px] items-center justify-center self-end rounded-[48px] bg-[#eaddff] text-[#21094a] shadow-[0_12px_28px_rgba(0,0,0,0.28)]"
        >
          <svg className="size-[42px]" viewBox="0 0 42 42" fill="none" stroke="currentColor" strokeWidth="6" aria-hidden="true">
            <path d="M21 0V42M0 21H42" />
          </svg>
        </button>
      </aside>

      <main className="relative -ml-[48px] flex flex-1 flex-col pb-[102px]">
        <div className="relative flex-1 overflow-hidden">
          <MapCanvas />
        </div>
        <button type="button" aria-label="Map attribution" className="absolute right-[30px] bottom-[132px] text-[#003a78]">
          <svg className="size-[66px]" viewBox="0 0 66 66" fill="none" stroke="currentColor" strokeWidth="5" strokeLinecap="round" aria-hidden="true">
            <circle cx="33" cy="33" r="30" />
            <circle cx="33" cy="17.500" r="3.800" fill="currentColor" stroke="none" />
            <path d="M28.500 29H34V49M28 49H41" strokeWidth="4" />
          </svg>
        </button>
        <MapButton label="Show QR code" className="top-[198px] right-[87px]">
          <QrIcon />
        </MapButton>
        <MapButton label="Center on my location" className="right-[72px] bottom-[174px]">
          <svg className="h-[57px] w-[45px]" viewBox="0 0 45 57" fill="currentColor" aria-hidden="true">
            <path d="M22.500 0 44.500 53Q45 56 42 56L22.500 48 3 56Q0 56 .5 53Z" />
          </svg>
        </MapButton>
      </main>

      <div className="absolute bottom-[24px] left-1/2 z-20 h-[15px] w-[471px] -translate-x-1/2 rounded-full bg-black" />
    </div>
  )
}
